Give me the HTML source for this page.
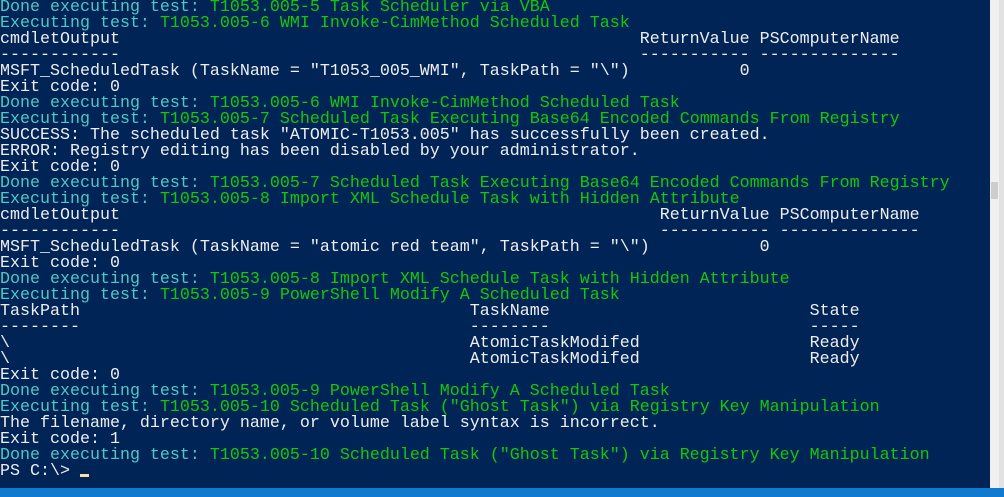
<!DOCTYPE html>
<html><head><meta charset="utf-8"><style>
html,body{margin:0;padding:0;width:1004px;height:497px;overflow:hidden;background:#012456;}
pre{position:absolute;left:0;top:0px;margin:0;font-family:"Liberation Mono",monospace;font-size:16.67px;line-height:16px;color:#eeedf0;white-space:pre;}
.c{color:#4fc8c8}.g{color:#16c60c}
#sb{position:absolute;left:990px;top:0;width:14px;height:488px;background:#f0f0f0;}
#sb2{position:absolute;left:999px;top:0;width:5px;height:488px;background:#e2e2e2;}
#th{position:absolute;left:991px;top:182px;width:7px;height:17px;background:#cdcdcd;}
#bot{position:absolute;left:0;top:488px;width:1004px;height:9px;background:#1079d0;}
#cur{position:absolute;left:80px;top:474px;width:9px;height:3px;background:#fedba9;}
</style></head><body>
<pre><span class="c">Done executing test: </span><span class="g">T1053.005-5 Task Scheduler via VBA</span>
<span class="c">Executing test: </span><span class="g">T1053.005-6 WMI Invoke-CimMethod Scheduled Task</span>
cmdletOutput                                                    ReturnValue PSComputerName
------------                                                    ----------- --------------
MSFT_ScheduledTask (TaskName = "T1053_005_WMI", TaskPath = "\")           0
Exit code: 0
<span class="c">Done executing test: </span><span class="g">T1053.005-6 WMI Invoke-CimMethod Scheduled Task</span>
<span class="c">Executing test: </span><span class="g">T1053.005-7 Scheduled Task Executing Base64 Encoded Commands From Registry</span>
SUCCESS: The scheduled task "ATOMIC-T1053.005" has successfully been created.
ERROR: Registry editing has been disabled by your administrator.
Exit code: 0
<span class="c">Done executing test: </span><span class="g">T1053.005-7 Scheduled Task Executing Base64 Encoded Commands From Registry</span>
<span class="c">Executing test: </span><span class="g">T1053.005-8 Import XML Schedule Task with Hidden Attribute</span>
cmdletOutput                                                      ReturnValue PSComputerName
------------                                                      ----------- --------------
MSFT_ScheduledTask (TaskName = "atomic red team", TaskPath = "\")           0
Exit code: 0
<span class="c">Done executing test: </span><span class="g">T1053.005-8 Import XML Schedule Task with Hidden Attribute</span>
<span class="c">Executing test: </span><span class="g">T1053.005-9 PowerShell Modify A Scheduled Task</span>
TaskPath                                       TaskName                          State
--------                                       --------                          -----
\                                              AtomicTaskModifed                 Ready
\                                              AtomicTaskModifed                 Ready
Exit code: 0
<span class="c">Done executing test: </span><span class="g">T1053.005-9 PowerShell Modify A Scheduled Task</span>
<span class="c">Executing test: </span><span class="g">T1053.005-10 Scheduled Task ("Ghost Task") via Registry Key Manipulation</span>
The filename, directory name, or volume label syntax is incorrect.
Exit code: 1
<span class="c">Done executing test: </span><span class="g">T1053.005-10 Scheduled Task ("Ghost Task") via Registry Key Manipulation</span>
PS C:\&gt; </pre>
<div id="cur"></div>
<div id="sb"></div><div id="sb2"></div><div id="th"></div>
<div id="bot"></div>
</body></html>
